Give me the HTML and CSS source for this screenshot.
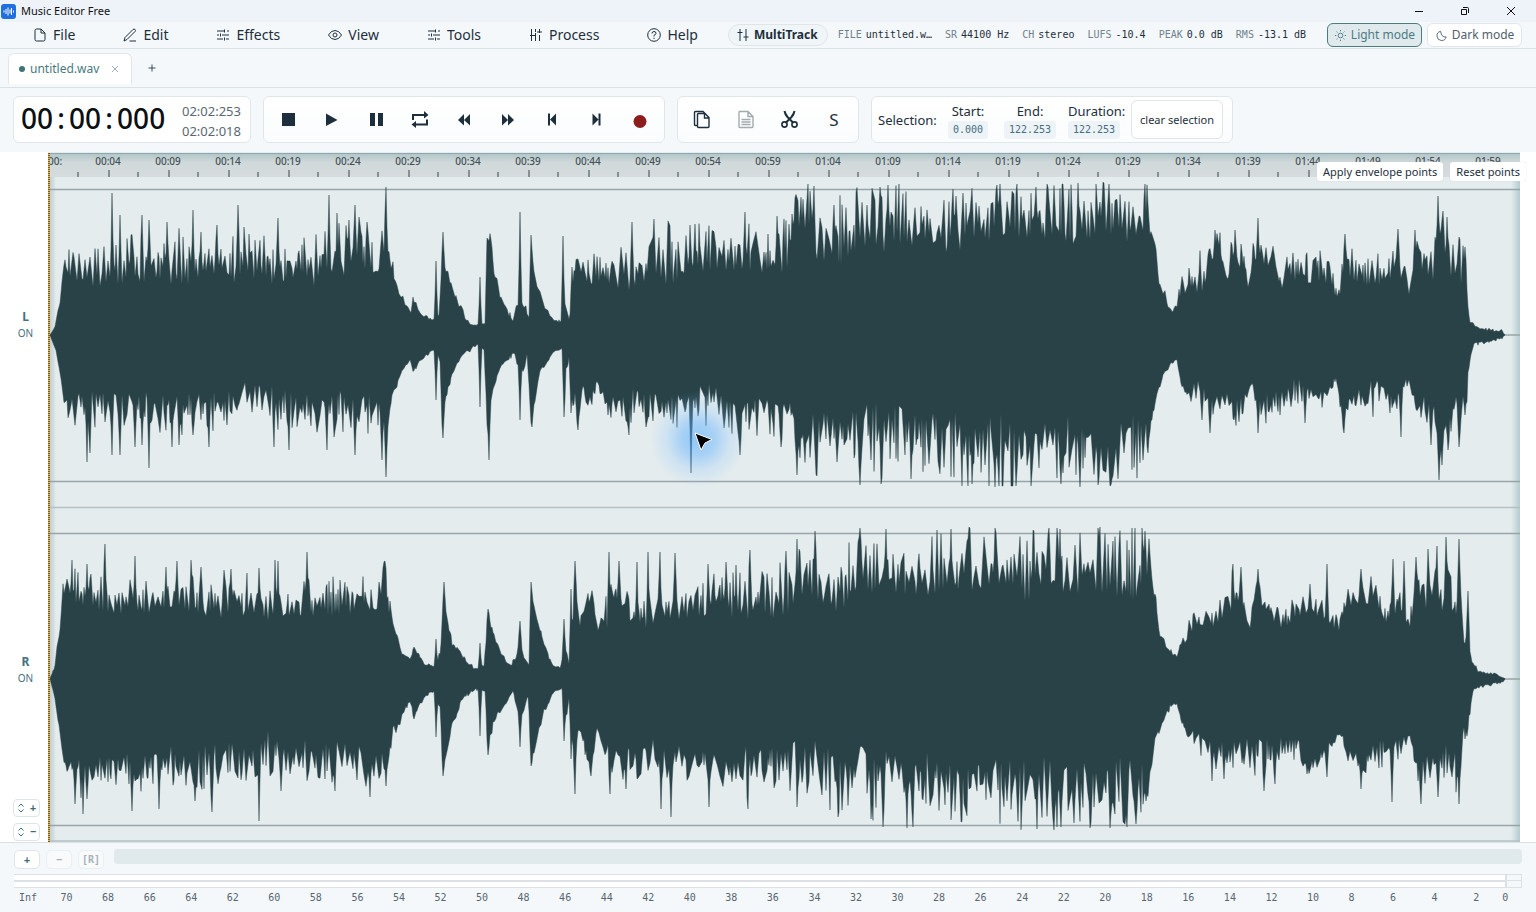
FILE: index.html
```html
<!DOCTYPE html>
<html lang="en">
<head>
<meta charset="utf-8">
<title>Music Editor Free</title>
<link rel="stylesheet" href="styles.css">
</head>
<body>
<svg class="defs" width="0" height="0" aria-hidden="true">
  <symbol id="i-sliders" viewBox="0 0 14 14"><path d="M1 3h7M11 3h2M1 7h2M6 7h7M1 11h6M10 11h3M8.500 1.500v3M4.500 5.500v3M8.500 9.500v3"/></symbol>
  <symbol id="i-zoomv" viewBox="0 0 8 10"><path d="M1.500 3.500 4 1l2.500 2.500M1.500 6.500 4 9l2.500-2.500"/></symbol>
</svg>

<header class="titlebar">
  <svg class="logo" viewBox="0 0 15 15"><rect width="15" height="15" rx="3" fill="#1f6fe0"/><path d="M3 6.500v2M5 5v5M7 3.500v8M9 5.500v4M10.500 4v7M12.500 6.500v2" stroke="#fff" stroke-width="1" fill="none"/></svg>
  <h1 class="app-name">Music Editor Free</h1>
  <div class="window-buttons">
    <button class="win-btn" aria-label="Minimize"><svg viewBox="0 0 10 10"><path d="M1 5.500h8"/></svg></button>
    <button class="win-btn" aria-label="Restore"><svg viewBox="0 0 10 10"><path d="M1.500 3.500h5v5h-5zM3 1.500h4.500q1 0 1 1V7"/></svg></button>
    <button class="win-btn" aria-label="Close"><svg viewBox="0 0 10 10"><path d="M1 1l8 8M9 1l-8 8"/></svg></button>
  </div>
</header>

<div class="menubar">
  <nav class="menu">
    <button class="menu-item"><svg class="icon" viewBox="0 0 14 14"><path d="M8 1H3.500q-1.500 0-1.500 1.500v9q0 1.500 1.500 1.500h7q1.500 0 1.500-1.500V5zM8 1v4h4"/></svg>File</button>
    <button class="menu-item"><svg class="icon" viewBox="0 0 14 14"><path d="M1 13l1-3.500L10 1.500q1-1 2 0t0 2L4 11.500zM6.500 13H13"/></svg>Edit</button>
    <button class="menu-item"><svg class="icon"><use href="#i-sliders"/></svg>Effects</button>
    <button class="menu-item"><svg class="icon" viewBox="0 0 14 14"><path d="M.500 7Q3 2.500 7 2.500T13.500 7Q11 11.500 7 11.500T.500 7z"/><circle cx="7" cy="7" r="2"/></svg>View</button>
    <button class="menu-item"><svg class="icon"><use href="#i-sliders"/></svg>Tools</button>
    <button class="menu-item"><svg class="icon" viewBox="0 0 14 14"><path d="M2.500 1v12M6.500 1v3M6.500 5v8M10.500 1v4M10.500 7v6M1 7.500h5M8 4h5"/></svg>Process</button>
    <button class="menu-item"><svg class="icon" viewBox="0 0 14 14"><circle cx="7" cy="7" r="6.300"/><path d="M5 5.500Q5 3.500 7 3.500t2 1.800Q9 6.500 7 7.300V8.500M7 9.800v1.200"/></svg>Help</button>
  </nav>
  <button class="multitrack"><svg class="icon" viewBox="0 0 14 14"><path d="M4 1v12M1.500 4.500h5M10 1v12M7.500 9h5"/></svg>MultiTrack</button>
  <dl class="status">
    <div class="stat"><dt>FILE</dt><dd>untitled.w…</dd></div>
    <div class="stat"><dt>SR</dt><dd>44100 Hz</dd></div>
    <div class="stat"><dt>CH</dt><dd>stereo</dd></div>
    <div class="stat"><dt>LUFS</dt><dd>-10.4</dd></div>
    <div class="stat"><dt>PEAK</dt><dd>0.0 dB</dd></div>
    <div class="stat"><dt>RMS</dt><dd>-13.1 dB</dd></div>
  </dl>
  <div class="modes">
    <button class="mode active" aria-pressed="true"><svg class="icon" viewBox="0 0 14 14"><circle cx="7" cy="7" r="2.500"/><path d="M7 1v1.500M7 11.500V13M1 7h1.500M11.500 7H13M2.800 2.800l1 1M10.200 10.200l1 1M11.200 2.800l-1 1M3.800 10.200l-1 1"/></svg>Light mode</button>
    <button class="mode" aria-pressed="false"><svg class="icon" viewBox="0 0 14 14"><path d="M6 2.500A5 5 0 1 0 12 8.500Q7 9.500 6 2.500z"/></svg>Dark mode</button>
  </div>
</div>

<div class="tabs">
  <div class="tab"><span class="dot"></span><span class="tab-name">untitled.wav</span><button class="tab-close" aria-label="Close tab"><svg viewBox="0 0 8 8"><path d="M1 1l6 6M7 1l-6 6"/></svg></button></div>
  <button class="tab-add" aria-label="New tab"><svg viewBox="0 0 8 8"><path d="M4 .500v7M.500 4h7"/></svg></button>
</div>

<div class="toolbar">
  <section class="panel clock" aria-label="Time">
    <div class="time">00<span class="colon">:</span>00<span class="colon">:</span>000</div>
    <div class="totals"><span>02:02:253</span><span>02:02:018</span></div>
  </section>
  <section class="panel buttons" aria-label="Transport">
    <button class="tool" aria-label="Stop"><svg viewBox="0 0 20 20"><path d="M4 3h13v13H4z"/></svg></button>
    <button class="tool" aria-label="Play"><svg viewBox="0 0 20 20"><path d="M4 3.500 15.500 10 4 16z"/></svg></button>
    <button class="tool" aria-label="Pause"><svg viewBox="0 0 20 20"><path d="M4 3h5v13H4zM12 3h5v13h-5z"/></svg></button>
    <button class="tool" aria-label="Loop"><svg viewBox="0 0 20 20"><path d="M14 1l4.500 4L14 8.500V6H4v4H2V4h12zM6 11v2.500h10V9.500h2v6H6V18l-4.500-3.500z"/></svg></button>
    <button class="tool" aria-label="Rewind"><svg viewBox="0 0 20 20"><path d="M10 4v11.500L4 10zM16 4v11.500L10 10z"/></svg></button>
    <button class="tool" aria-label="Forward"><svg viewBox="0 0 20 20"><path d="M4 4v11.500L10 10zM10 4v11.500L16 10z"/></svg></button>
    <button class="tool" aria-label="Go to start"><svg viewBox="0 0 20 20"><path d="M6 3.500h2v12H6zM14 3.500v12L8 9.500z"/></svg></button>
    <button class="tool" aria-label="Go to end"><svg viewBox="0 0 20 20"><path d="M12.500 3.500h2v12h-2zM6.500 3.500v12l6-6z"/></svg></button>
    <button class="tool" aria-label="Record"><svg viewBox="0 0 20 20"><circle class="rec" cx="10" cy="11.500" r="6.500"/></svg></button>
  </section>
  <section class="panel buttons" aria-label="Edit">
    <button class="tool line" aria-label="Copy"><svg viewBox="0 0 20 20"><path d="M5 15.500H3.500q-1 0-1-1v-12q0-1 1-1H11l2 2M6.500 3.500h6.500l4 4v9q0 1-1 1H6.500q-1 0-1-1v-12q0-1 1-1zM12.500 3.500v4.500H17"/></svg></button>
    <button class="tool line faded" aria-label="Paste"><svg viewBox="0 0 20 20"><path d="M3.500 1.500h8.500l5 5v10q0 1-1 1h-12q-1 0-1-1v-14q0-1 .500-1zM12 1.500v5h5M5.500 9.500h9M5.500 12h9M5.500 14.500h9"/></svg></button>
    <button class="tool line cut" aria-label="Cut"><svg viewBox="0 0 20 20"><path d="M4.500 1q.500 3 3 6l6 6M14.500 1q-.500 3-3 6l-6 6"/><circle cx="4.500" cy="14.500" r="2.600"/><circle cx="14.500" cy="14.500" r="2.600"/></svg></button>
    <button class="tool letter">S</button>
  </section>
  <section class="panel selection" aria-label="Selection">
    <span class="sel-title">Selection:</span>
    <div class="field start"><span>Start:</span><output>0.000</output></div>
    <div class="field end"><span>End:</span><output>122.253</output></div>
    <div class="field length"><span>Duration:</span><output>122.253</output></div>
    <button class="clear">clear selection</button>
  </section>
</div>

<main class="stage">
  <aside class="gutter">
    <button class="channel"><b>L</b><span>ON</span></button>
    <button class="channel"><b>R</b><span>ON</span></button>
    <div class="vzoom">
      <button class="vz" aria-label="Taller"><svg viewBox="0 0 8 10"><use href="#i-zoomv"/></svg>+</button>
      <button class="vz" aria-label="Shorter"><svg viewBox="0 0 8 10"><use href="#i-zoomv"/></svg>−</button>
    </div>
  </aside>
  <div class="wave">
    <svg class="plot" id="plot" viewBox="0 0 1472 690" preserveAspectRatio="none" role="img" aria-label="Stereo waveform">
      <path class="rule" d="M0 37.500H1472M0 183H1472M0 329.500H1472M0 381.500H1472M0 527H1472M0 673.500H1472"/>
      <path class="split" d="M0 355.500H1472M0 689H1472"/>
    </svg>
    <div class="ruler" id="ruler"></div>
    <div class="halo"></div>
    <svg class="pointer" viewBox="0 0 20 20"><path d="M2 2 19 8.500 12 12 8 19z"/></svg>
    <div class="envelope"><button>Apply envelope points</button><button>Reset points</button></div>
  </div>
</main>

<footer class="bottom">
  <div class="hscroll">
    <button class="hz">+</button><button class="hz" disabled>−</button><button class="hz" disabled>[R]</button>
    <div class="track"></div>
  </div>
  <div class="meter"><div class="bars"></div><div class="clip"></div></div>
  <div class="scale" id="scale"></div>
</footer>
<script src="wave.js"></script>
</body>
</html>
```

FILE: styles.css
```css
* { box-sizing: border-box; }
body {
  margin: 0;
  height: 100vh;
  display: flex;
  flex-direction: column;
  overflow: hidden;
  background: #fff;
  color: #1d2f3c;
  font: 13px/16px "Noto Sans", sans-serif;
}
button {
  margin: 0;
  padding: 0;
  border: 0;
  background: none;
  color: inherit;
  font: inherit;
  white-space: nowrap;
}
svg { display: block; fill: none; stroke: currentColor; }
.defs { position: absolute; }
.icon { width: 14px; height: 14px; flex: none; }

.titlebar {
  flex: none;
  display: flex;
  align-items: center;
  height: 22px;
  padding-left: 1px;
  background: #eef3fa;
}
.logo { width: 15px; height: 15px; stroke: none; }
.app-name { margin: 0 0 0 5px; font-size: 11px; font-weight: 400; color: #111; }
.window-buttons { display: flex; margin-left: auto; padding-right: 2px; }
.win-btn { width: 46px; height: 22px; display: grid; place-items: center; color: #111; }
.win-btn svg { width: 10px; height: 10px; }

.menubar {
  flex: none;
  display: flex;
  align-items: center;
  height: 27px;
  padding: 0 14px 0 9px;
  background: #f4f8fb;
  border-bottom: 1px solid #dbe2e6;
}
.menu { display: flex; font-size: 14px; }
.menu-item { display: flex; align-items: center; gap: 6px; padding: 0 24px; }
.multitrack {
  display: flex;
  align-items: center;
  gap: 4px;
  height: 22px;
  margin-left: 6px;
  padding: 0 9px 0 7px;
  border: 1px solid #dfe6ea;
  border-radius: 11px;
  background: #f0f5f7;
  font-size: 12px;
  font-weight: 700;
}
.status {
  display: flex;
  gap: 13px;
  margin: 0 0 0 10px;
  font: 10px/14px "DejaVu Sans Mono", monospace;
}
.stat { display: flex; gap: 4px; white-space: nowrap; }
.stat dt { color: #70828e; }
.stat dd { margin: 0; }
.modes { display: flex; gap: 5px; margin-left: auto; }
.mode {
  display: flex;
  align-items: center;
  justify-content: center;
  gap: 4px;
  width: 95px;
  height: 24px;
  border: 1px solid #e0e7eb;
  border-radius: 6px;
  background: #fff;
  color: #52616c;
  font-size: 12px;
}
.mode .icon { width: 13px; height: 13px; }
.mode.active { background: #e0eaec; border-color: #4c7b82; color: #4b7a86; }

.tabs {
  flex: none;
  display: flex;
  align-items: flex-start;
  height: 39px;
  padding: 4px 8px;
  background: #f4f8fb;
  border-bottom: 1px solid #dbe2e6;
}
.tab {
  display: flex;
  align-items: center;
  width: 124px;
  height: 31px;
  padding: 0 12px 0 10px;
  border: 1px solid #e0e7eb;
  border-bottom: 0;
  border-radius: 6px 6px 0 0;
  background: #fff;
  color: #4a7a80;
  font-size: 12px;
}
.dot { width: 6px; height: 6px; margin-right: 5px; border-radius: 50%; background: #3f7474; }
.tab-close { margin-left: auto; color: #9fb0b6; }
.tab-close svg, .tab-add svg { width: 8px; height: 8px; }
.tab-add { height: 30px; padding: 0 16px; color: #3d4c57; }

.toolbar {
  flex: none;
  display: flex;
  gap: 12px;
  height: 64px;
  padding: 8px 13px 9px;
  background: #f4f8fb;
}
.panel {
  display: flex;
  align-items: center;
  border: 1px solid #e0e7eb;
  border-radius: 6px;
  background: linear-gradient(#fff, #fafcfd);
}
.clock { width: 238px; justify-content: space-between; padding: 0 9px 0 7px; background: #fff; }
.time { display: flex; padding-bottom: 4px; font-size: 28px; font-weight: 500; line-height: 40px; color: #0c1014; }
.colon { width: 16px; text-align: center; }
.totals { display: flex; flex-direction: column; padding-top: 2px; line-height: 20px; color: #5a6872; }
.buttons { padding: 0 2px; }
.tool { width: 44px; height: 44px; display: grid; place-items: center; }
.tool svg { width: 20px; height: 20px; fill: currentColor; stroke: none; }
.tool.line svg { fill: none; stroke: currentColor; }
.tool.line path { stroke-width: 1.400; }
.tool.faded { color: #a2abb0; }
.tool.cut svg { stroke-width: 1.600; }
.tool.cut path { stroke-width: 2; }
.tool.letter { font-size: 17px; }
.tool .rec { fill: #8c1d1d; }
.selection { width: 362px; padding: 0 9px 0 6px; }
.sel-title { width: 66px; }
.field { display: flex; flex-direction: column; align-items: center; gap: 2px; padding-top: 2px; }
.field output {
  padding: 1px 5px;
  border-radius: 4px;
  background: #edf3f6;
  color: #45707f;
  font: 10px/16px "DejaVu Sans Mono", monospace;
}
.start { width: 48px; }
.end { width: 76px; }
.length { width: 60px; align-items: flex-start; }
.clear {
  height: 39px;
  margin-left: auto;
  padding: 0 8px;
  border: 1px solid #dfe6ea;
  border-radius: 6px;
  background: #fff;
  font-size: 11px;
}

.stage { flex: 1; min-height: 0; display: flex; padding-right: 16px; }
.gutter { position: relative; flex: none; width: 48px; display: grid; grid-template-rows: 1fr 1fr; }
.channel {
  display: flex;
  flex-direction: column;
  align-items: center;
  justify-content: center;
  padding-left: 3px;
  color: #44727f;
  font-size: 10px;
}
.channel b { font-size: 12px; }
.vzoom { position: absolute; left: 13px; bottom: 1px; display: grid; gap: 6px; }
.vz {
  display: flex;
  align-items: center;
  justify-content: space-between;
  width: 27px;
  height: 18px;
  padding: 0 3px;
  border: 1px solid #dfe6ea;
  border-radius: 4px;
  color: #3f6a70;
  font: 700 10px/16px "DejaVu Sans Mono", monospace;
}
.vz svg { width: 8px; height: 10px; }

.wave {
  position: relative;
  flex: 1;
  min-width: 0;
  border-top: 1px solid #e4ecee;
  background:
    linear-gradient(90deg, #c2cfd1, #d4dfe2 60%, #d4dfe200) 2px 0 / 6px 100% no-repeat,
    linear-gradient(270deg, #b3cccf, #b3cccf00) 100% 0 / 9px 100% no-repeat,
    #e4ecee;
}
.wave::after {
  content: "";
  position: absolute;
  inset: 0 auto 0 0;
  width: 2px;
  background: repeating-linear-gradient(#7e5f1c 0 1px, #d6b662 1px 2px);
}
.plot { position: absolute; top: -1px; left: 0; width: 100%; height: calc(100% + 1px); }
.rule { stroke: #98a4a7; stroke-width: 1.400; }
.split { stroke: #b4c0c3; stroke-width: 1.400; }
.shape { fill: #284248; stroke: #284248; stroke-width: 1; stroke-opacity: 0.450; }
.ruler {
  position: relative;
  display: flex;
  height: 24px;
  overflow: hidden;
  background: linear-gradient(#b3c7ca, #cfd8da 8px, #d7dcde);
  border-top: 1px solid #8fa8ac;
  color: #465155;
  font-size: 10px;
  font-weight: 500;
  line-height: 15px;
}
.tick { position: relative; flex: 0 0 60px; text-align: center; }
.tick:first-child { flex-basis: 30px; text-align: left; }
.tick::before, .tick::after {
  content: "";
  position: absolute;
  bottom: 0;
  width: 2px;
  background: #879194;
}
.tick::before { left: 50%; height: 7px; }
.tick::after { right: -1px; height: 5px; }
.tick:first-child::before { content: none; }
.halo {
  position: absolute;
  left: 602px;
  top: 238px;
  width: 96px;
  height: 96px;
  border-radius: 50%;
  background: radial-gradient(closest-side, #4aa8ff8c, #5cb0ff70 35%, #7fc0ff38 65%, #8fc8ff00);
}
.pointer { position: absolute; left: 645px; top: 278px; width: 20px; height: 20px; fill: #000; stroke: #fff; }
.envelope { position: absolute; z-index: 1; top: 9px; right: -6px; display: flex; gap: 7px; }
.envelope button { height: 19px; padding: 0 6px; border-radius: 3px; background: #fff; box-shadow: 0 0 1px #c4ced2; font-size: 11px; }

.bottom { flex: none; height: 70px; padding: 6px 14px 0; background: #f4f8fb; border-top: 1px solid #dbe2e6; }
.hscroll { display: flex; align-items: flex-start; gap: 6px; height: 25px; }
.hz {
  width: 26px;
  height: 19px;
  margin-top: 1px;
  border: 1px solid #dfe6ea;
  border-radius: 5px;
  background: #fff;
  color: #3f6a70;
  font: 700 10px/16px "DejaVu Sans Mono", monospace;
}
.hz:disabled { background: #f8fafc; border-color: #ebeff2; color: #a6b1b8; }
.track { flex: 1; height: 15px; margin-left: 4px; border-radius: 4px; background: #e0e9eb; }
.meter { display: flex; height: 14px; border: 1px solid #dbe1e4; border-left: 0; }
.bars { flex: 1; background: linear-gradient(#fff 5px, #dbe1e4 5px 7px, #fff 7px); }
.clip { width: 16px; border-left: 2px solid #dbe1e4; background: linear-gradient(#f4f8fb 5px, #dbe1e4 5px 6px, #f4f8fb 6px); }
.scale {
  display: flex;
  padding: 3px 0 0 5px;
  color: #586670;
  font: 10px/14px "DejaVu Sans Mono", monospace;
}
.scale span { flex: 1; width: 0; }
.scale span:nth-last-child(2) { flex: 0 0 29px; }
.scale span:last-child { flex: 0 0 20px; }
```

FILE: wave.js
```js
// Time ruler: one label every five seconds.
const ruler = document.getElementById('ruler');
const addSpan = (parent, text, cls) => {
  const el = document.createElement('span');
  if (cls) el.className = cls;
  el.textContent = text;
  parent.appendChild(el);
};
addSpan(ruler, '00:', 'tick');
for (let s = 4; s < 122; s += 5) {
  addSpan(ruler, '0' + Math.floor(s / 60) + ':' + String(s % 60).padStart(2, '0'), 'tick');
}

// Level scale in decibels.
const scale = document.getElementById('scale');
addSpan(scale, 'Inf');
for (let d = 70; d >= 0; d -= 2) addSpan(scale, d);

// Envelopes: knots are [x, low, high]; spikes are [x, height].
const sides = [
  { mid: 183, dir: -1, seed: 11,
    knots: [[2,0,0],[7,8,12],[12,32,34],[15,60,64],[17,72,92],[20,62,98],[50,50,85],[90,58,92],[88,58,92],[140,55,95],[180,58,98],[240,55,92],[270,52,98],[300,66,108],[330,66,105],[336,82,110],[341,75,88],[345,58,70],[349,45,50],[357,30,34],[363,22,25],[368,30,33],[372,21,23],[382,15,18],[386,14,18],[391,20,22],[394,70,76],[399,60,65],[404,46,50],[410,29,34],[419,12,16],[426,9,11],[437,11,13],[439,95,101],[443,95,101],[446,60,66],[452,38,45],[459,22,27],[465,14,16],[469,30,34],[476,28,34],[481,15,18],[484,76,82],[489,46,52],[495,28,36],[502,16,20],[512,11,14],[517,30,36],[521,14,18],[525,38,60],[528,72,84],[540,54,78],[560,50,82],[590,48,88],[620,56,100],[640,54,92],[660,70,105],[700,66,100],[720,66,96],[744,68,108],[748,104,136],[765,110,145],[769,74,104],[800,76,130],[830,86,140],[850,92,148],[870,95,120],[900,86,132],[920,96,145],[960,106,150],[990,96,146],[1030,98,146],[1060,108,150],[1080,92,140],[1098,98,142],[1104,88,110],[1108,80,90],[1111,50,54],[1116,38,46],[1120,28,34],[1125,21,23],[1129,28,36],[1133,44,62],[1158,44,78],[1162,76,102],[1172,80,100],[1179,54,58],[1184,70,96],[1194,70,96],[1200,48,52],[1206,72,94],[1218,66,88],[1235,48,76],[1250,56,80],[1270,54,78],[1282,50,76],[1287,39,46],[1292,40,52],[1296,72,94],[1304,58,84],[1330,50,76],[1345,60,84],[1357,55,80],[1361,40,44],[1367,74,96],[1385,60,92],[1389,92,128],[1400,66,110],[1409,62,90],[1414,50,90],[1418,46,80],[1422,12,15],[1430,6,8],[1454,2,5],[1457,0,0]],
    spikes: [[64,142],[72,120],[83,100],[94,120],[101,115],[119,113],[145,125],[153,103],[169,110],[190,130],[230,117],[281,140],[289,122],[301,115],[307,130],[311,118],[319,113],[338,148],[365,38],[388,74],[395,103],[432,58],[472,123],[483,100],[515,99],[524,68],[584,113],[606,116],[621,108],[642,110],[647,111],[697,123],[729,119],[744,121],[766,149],[786,130],[832,148],[840,150],[905,146],[949,150],[988,148],[1030,152],[1055,153],[1097,149],[1167,105],[1187,105],[1210,117],[1297,101],[1350,106],[1367,105],[1390,139],[1395,124],[1399,118],[1411,98],[1417,88]] },
  { mid: 183, dir: 1, seed: 29,
    knots: [[2,0,0],[8,14,16],[13,44,46],[16,66,74],[25,58,84],[60,60,84],[120,62,92],[180,60,92],[190,50,76],[220,54,86],[250,64,90],[290,60,94],[310,60,90],[330,66,96],[340,88,92],[344,58,62],[350,45,50],[354,34,36],[362,24,26],[365,34,39],[372,25,27],[382,16,18],[387,15,16],[392,24,28],[394,78,84],[398,60,64],[404,38,42],[412,22,25],[422,13,16],[430,9,10],[436,14,16],[439,82,90],[443,62,66],[448,43,47],[452,32,34],[462,20,24],[466,16,18],[470,28,32],[475,36,42],[479,17,20],[483,82,88],[487,62,66],[492,34,38],[499,26,30],[505,16,19],[514,13,15],[517,40,60],[521,20,24],[525,52,70],[530,70,88],[535,52,64],[540,66,80],[549,46,50],[560,66,82],[580,56,86],[600,60,82],[630,62,88],[665,50,80],[680,66,90],[700,62,92],[744,66,92],[749,100,118],[770,80,125],[800,78,125],[830,72,128],[860,80,128],[890,76,125],[920,92,144],[960,86,146],[980,98,142],[1010,84,132],[1040,96,146],[1070,98,142],[1085,82,135],[1098,92,130],[1102,90,98],[1107,66,72],[1112,48,52],[1117,34,38],[1122,27,31],[1129,23,25],[1133,44,50],[1139,58,66],[1148,45,62],[1165,68,86],[1173,58,72],[1190,66,86],[1204,48,52],[1212,66,84],[1230,52,78],[1246,44,62],[1270,56,72],[1280,52,64],[1288,41,44],[1295,82,94],[1302,58,80],[1330,46,74],[1346,58,78],[1361,41,46],[1368,62,84],[1386,66,90],[1390,100,120],[1398,92,110],[1406,66,80],[1412,60,95],[1419,42,68],[1422,22,28],[1426,8,12],[1440,6,8],[1454,2,4],[1457,0,0]],
    spikes: [[39,127],[42,118],[64,120],[72,120],[87,112],[94,110],[101,133],[124,112],[131,110],[145,100],[161,112],[226,112],[241,115],[279,115],[307,120],[334,125],[338,142],[388,65],[395,103],[432,72],[441,125],[472,85],[484,92],[516,82],[523,78],[530,95],[581,100],[598,92],[643,138],[692,120],[733,112],[749,140],[769,141],[812,150],[833,149],[863,144],[924,149],[947,152],[1013,149],[1032,152],[1050,150],[1100,118],[1154,85],[1162,98],[1186,85],[1210,98],[1232,80],[1257,88],[1296,98],[1353,102],[1383,110],[1391,145],[1394,130],[1400,115],[1411,112],[1417,80]] },
  { mid: 527, dir: -1, seed: 47,
    knots: [[2,0,0],[7,12,16],[12,50,54],[15,84,98],[25,68,100],[60,68,100],[90,68,92],[130,70,88],[170,64,102],[200,68,98],[220,58,80],[250,58,88],[290,68,98],[330,70,94],[336,90,116],[341,64,80],[345,52,58],[350,40,44],[354,23,28],[362,19,21],[366,30,32],[370,24,28],[376,14,17],[387,12,13],[392,13,34],[396,78,88],[400,52,60],[404,34,38],[411,28,31],[417,16,20],[427,9,11],[436,12,15],[440,62,68],[445,44,52],[450,31,34],[457,18,22],[463,12,15],[468,20,24],[472,36,44],[476,20,22],[481,14,16],[484,78,84],[489,58,62],[497,32,36],[502,15,19],[512,10,11],[517,28,36],[521,14,16],[525,38,64],[528,76,90],[532,52,60],[540,80,88],[546,68,84],[550,48,60],[560,52,88],[567,76,104],[580,68,90],[585,52,80],[610,54,88],[640,64,90],[670,68,98],[700,60,98],[740,68,106],[760,88,130],[775,78,104],[790,72,120],[820,92,140],[850,90,120],[880,86,128],[905,90,145],[930,88,130],[960,90,135],[975,84,140],[1000,96,146],[1020,86,130],[1045,96,142],[1065,86,135],[1098,86,142],[1104,84,116],[1108,70,80],[1112,42,48],[1118,32,38],[1124,24,27],[1129,22,24],[1133,32,42],[1145,50,64],[1165,50,72],[1180,70,94],[1193,78,98],[1202,50,56],[1208,88,104],[1218,66,84],[1236,50,70],[1255,64,78],[1270,62,84],[1280,56,68],[1291,48,58],[1298,76,92],[1325,76,96],[1334,60,76],[1342,54,78],[1350,72,92],[1362,50,60],[1368,86,112],[1380,70,96],[1396,66,104],[1406,58,90],[1412,78,104],[1416,38,52],[1420,38,60],[1424,14,20],[1430,7,9],[1440,5,7],[1454,2,5],[1457,0,0]],
    spikes: [[24,119],[39,115],[57,135],[87,123],[118,112],[129,118],[143,119],[153,112],[183,110],[211,111],[227,119],[230,118],[259,127],[337,118],[388,40],[396,97],[432,36],[440,69],[472,58],[483,97],[516,60],[523,90],[527,118],[561,127],[571,118],[589,117],[600,127],[612,127],[627,126],[660,115],[678,117],[688,114],[702,129],[738,128],[749,140],[767,148],[812,151],[838,150],[889,149],[903,150],[921,152],[922,151],[947,151],[985,149],[1012,150],[1052,152],[1097,148],[1185,115],[1193,112],[1210,110],[1262,95],[1279,115],[1313,110],[1345,120],[1356,118],[1368,122],[1380,130],[1389,133],[1398,142],[1411,140],[1420,88]] },
  { mid: 527, dir: 1, seed: 83,
    knots: [[2,0,0],[7,18,22],[12,52,60],[16,82,86],[25,76,102],[40,82,116],[60,78,104],[80,76,100],[90,90,112],[100,74,98],[120,70,98],[145,78,110],[170,62,106],[200,72,104],[218,54,84],[240,66,106],[270,64,98],[300,68,100],[335,72,98],[341,68,80],[345,44,52],[348,50,54],[354,36,40],[362,19,23],[366,36,40],[370,26,29],[378,15,18],[387,11,13],[392,20,34],[395,88,94],[400,64,70],[404,44,50],[409,34,38],[413,20,23],[420,13,16],[430,9,11],[437,12,13],[440,68,74],[444,46,54],[449,33,37],[457,25,28],[465,12,14],[470,30,34],[474,34,40],[480,16,19],[484,78,84],[488,62,66],[493,38,44],[500,20,24],[508,11,13],[514,9,10],[517,30,42],[522,18,22],[526,68,84],[530,48,58],[535,56,66],[542,88,96],[549,50,58],[558,66,78],[570,70,96],[585,72,96],[610,62,94],[640,74,96],[665,74,88],[675,88,112],[700,64,100],[735,74,100],[750,66,110],[790,72,120],[830,76,126],[860,82,118],[890,78,120],[910,92,132],[935,78,125],[970,90,135],[995,80,142],[1020,84,130],[1040,92,138],[1070,82,130],[1090,82,138],[1100,96,118],[1104,80,90],[1107,58,66],[1112,48,54],[1117,36,40],[1122,26,30],[1129,24,26],[1133,38,42],[1139,54,58],[1148,50,64],[1165,62,88],[1180,68,88],[1195,62,82],[1205,60,88],[1215,64,96],[1232,60,80],[1250,60,76],[1263,80,94],[1280,66,82],[1292,52,56],[1300,66,82],[1315,76,92],[1335,62,82],[1345,64,84],[1362,54,60],[1370,84,104],[1384,74,94],[1398,70,96],[1406,60,100],[1412,68,110],[1416,38,58],[1420,40,56],[1423,20,28],[1426,8,11],[1440,5,7],[1454,2,5],[1457,0,0]],
    spikes: [[27,125],[35,135],[39,120],[84,132],[111,130],[147,122],[164,133],[211,142],[233,112],[287,112],[322,118],[338,107],[366,40],[388,58],[395,97],[432,57],[440,76],[472,68],[483,87],[516,62],[523,80],[527,115],[543,97],[562,115],[578,110],[589,100],[613,130],[623,138],[661,128],[700,130],[749,128],[790,138],[823,140],[835,148],[859,149],[865,148],[913,143],[989,150],[1009,148],[1042,149],[1062,149],[1079,148],[1088,145],[1098,122],[1164,102],[1176,100],[1216,112],[1227,105],[1259,95],[1279,98],[1313,110],[1344,123],[1373,125],[1390,118],[1411,125],[1417,60]] }
];

const random = seed => () => {
  seed = (seed * 16807) % 2147483647;
  return seed / 2147483647;
};

// Noise between the low and high level: peaks and valleys two to four pixels apart.
function noiseTable(rnd) {
  const table = [];
  let from = 0;
  let high = false;
  while (table.length < 1460) {
    high = rnd() < 0.25 ? high : !high;
    const to = high ? 0.5 + Math.pow(rnd(), 1.6) * 0.85 : -0.15 + rnd() * 0.5;
    const steps = 1 + Math.floor(rnd() * 2.5);
    for (let i = 1; i <= steps; i++) table.push(from + (to - from) * i / steps);
    from = to;
  }
  return table;
}

function trace(side) {
  const rnd = random(side.seed * 7919);
  const noise = noiseTable(rnd);
  const knots = side.knots.slice().sort((a, b) => a[0] - b[0]);
  const levels = new Array(1460).fill(0);
  let k = 0;
  for (let x = 2; x <= 1457; x++) {
    while (k < knots.length - 2 && knots[k + 1][0] < x) k++;
    const [x0, a0, b0] = knots[k];
    const [x1, a1, b1] = knots[k + 1];
    const t = Math.min(1, Math.max(0, (x - x0) / (x1 - x0)));
    const low = a0 + (a1 - a0) * t;
    const high = b0 + (b1 - b0) * t;
    levels[x] = Math.max(0, Math.min(151, low + (high - low) * noise[x]));
  }
  for (const [x, h] of side.spikes) {
    levels[x] = Math.max(levels[x], h);
    for (const n of [x - 1, x + 1]) levels[n] += Math.max(0, h - levels[n]) * 0.4;
  }
  let d = 'M2 ' + side.mid;
  for (let x = 2; x <= 1457; x++) d += 'L' + x + ' ' + (side.mid + side.dir * levels[x]).toFixed(1);
  return d + 'V' + side.mid + 'z';
}

const plot = document.getElementById('plot');
for (const side of sides) {
  const path = document.createElementNS('http://www.w3.org/2000/svg', 'path');
  path.setAttribute('class', 'shape');
  path.setAttribute('d', trace(side));
  plot.appendChild(path);
}
```
